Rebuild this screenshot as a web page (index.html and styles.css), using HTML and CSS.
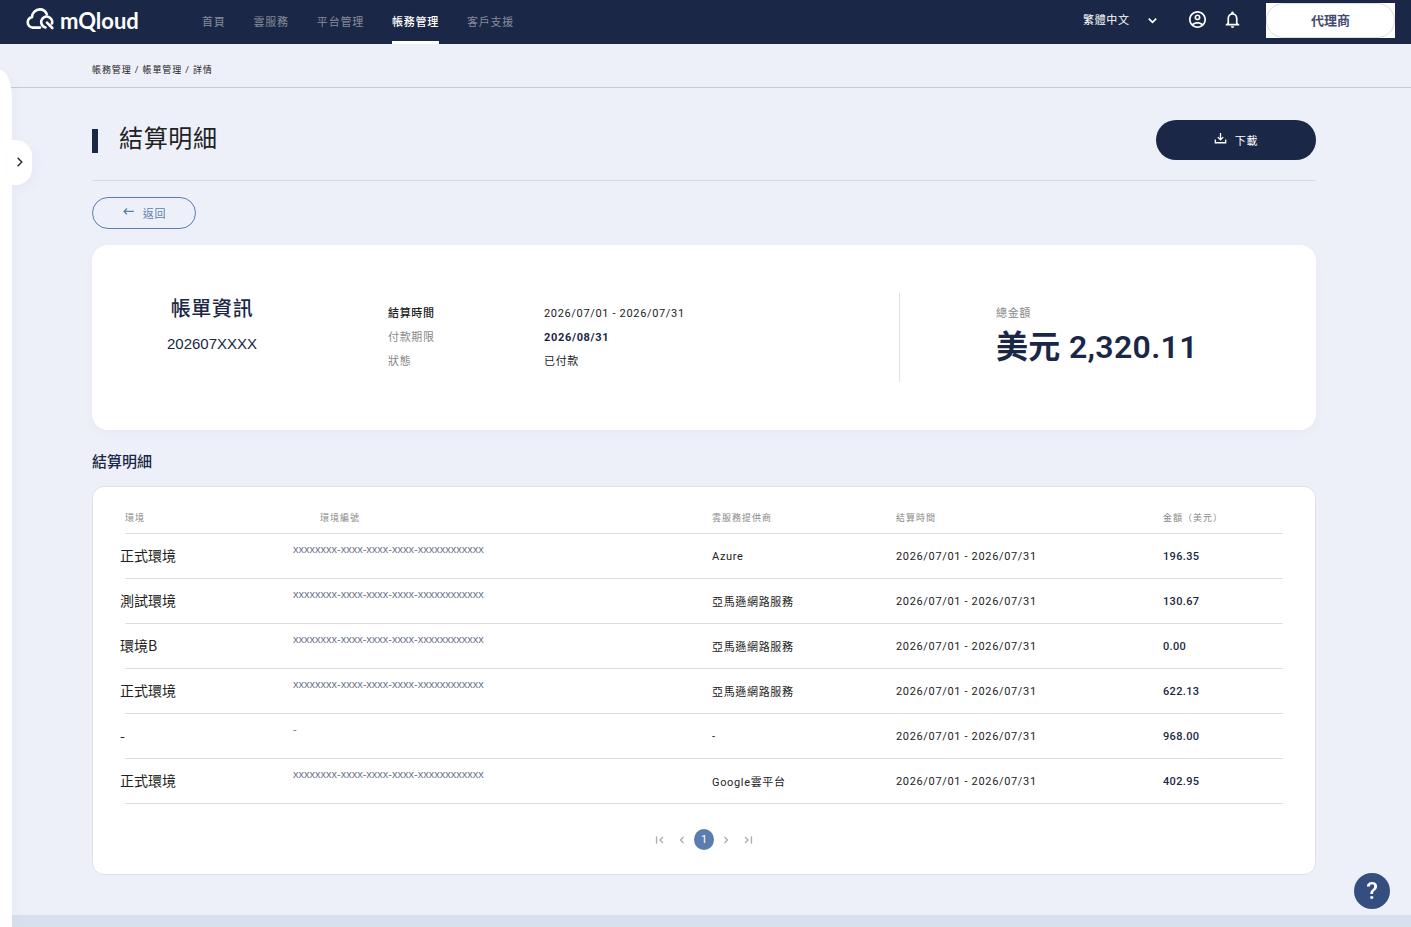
FILE: index.html
```html
<!DOCTYPE html>
<html lang="zh-Hant">
<head>
    <meta charset="UTF-8">
    <meta name="viewport" content="width=device-width, initial-scale=1">
    <title>結算明細 - MQloud</title>
    <link rel="stylesheet" href="styles.css">
</head>
<body>
<header class="header">
    <a class="logo" href="#" aria-label="MQloud">
        <svg class="logo-icon" viewBox="0 0 28 22" fill="none" stroke="#fff" stroke-width="2.6" stroke-linecap="round" stroke-linejoin="round">
            <path d="M14 19.600H6.800A5.300 5.300 0 0 1 6 9.100C6.300 4.600 9.600 1.400 13.800 1.400C17.200 1.400 19.700 3.300 20.800 6.200"/>
            <path d="M19.500 19.400A5.500 5.500 0 1 1 26 15.500M21 14.600L26.300 20"/>
        </svg>
        <span class="logo-text">mQloud</span>
    </a>
    <nav class="nav">
        <a href="#">首頁</a>
        <a href="#">雲服務</a>
        <a href="#">平台管理</a>
        <a href="#" class="active">帳務管理</a>
        <a href="#">客戶支援</a>
    </nav>
    <div class="tools">
        <div class="lang">
            <select aria-label="語言">
                <option>繁體中文</option>
                <option>English</option>
            </select>
            <svg viewBox="0 0 8 8" fill="none" stroke="#fff" stroke-width="1.5"><path d="M.7 2.300L4 5.600L7.300 2.300"/></svg>
        </div>
        <button class="icon-btn" aria-label="帳號">
            <svg viewBox="2 2 20 20" fill="#fff"><path d="M12 2C6.480 2 2 6.480 2 12s4.480 10 10 10 10-4.480 10-10S17.520 2 12 2zM7.350 18.500C8.660 17.560 10.260 17 12 17s3.340.56 4.650 1.500C15.340 19.440 13.740 20 12 20s-3.340-.56-4.650-1.500zm10.790-1.380C16.450 15.800 14.320 15 12 15s-4.450.8-6.140 2.120C4.700 15.730 4 13.950 4 12c0-4.420 3.580-8 8-8s8 3.580 8 8c0 1.950-.7 3.730-1.860 5.120zM12 6c-1.930 0-3.500 1.570-3.500 3.500S10.070 13 12 13s3.500-1.570 3.500-3.500S13.930 6 12 6zm0 5c-.83 0-1.500-.67-1.500-1.500S11.170 8 12 8s1.500.67 1.500 1.500S12.830 11 12 11z"/></svg>
        </button>
        <button class="icon-btn" aria-label="通知">
            <svg viewBox="2 2 20 20" fill="#fff"><path d="M12 22c1.100 0 2-.9 2-2h-4c0 1.100.9 2 2 2zm6-6v-5c0-3.070-1.630-5.640-4.500-6.320V4c0-.83-.67-1.500-1.500-1.500s-1.500.67-1.500 1.500v.68C7.640 5.360 6 7.920 6 11v5l-2 2v1h16v-1l-2-2zm-2 1H8v-6c0-2.480 1.510-4.500 4-4.500s4 2.020 4 4.500v6z"/></svg>
        </button>
        <div class="role">
            <button>代理商</button>
        </div>
    </div>
</header>

<div class="breadcrumb">帳務管理 / 帳單管理 / 詳情</div>

<aside class="drawer">
    <button class="drawer-toggle" aria-label="展開選單">
        <svg viewBox="0 0 10 10" fill="none" stroke="#222" stroke-width="1.100"><path d="M3 1.500L6.500 5L3 8.500"/></svg>
    </button>
</aside>

<main class="content">
    <div class="title-bar">
        <h1>結算明細</h1>
        <button class="download">
            <svg viewBox="0 0 12 12" fill="none" stroke="#fff" stroke-width="1.200"><path d="M6 0V6M3.500 3.800L6 6.300L8.500 3.800M1.200 6V9H10.800V6"/></svg>
            下載
        </button>
    </div>
    <button class="back">
        <svg viewBox="0 0 12 12" fill="none" stroke="#5a7dae" stroke-width="1.200"><path d="M11 5H2M4.600 2.300L1.900 5L4.600 7.700"/></svg>
        返回
    </button>

    <section class="bill">
        <div class="bill-name">
            <h2>帳單資訊</h2>
            <p>202607XXXX</p>
        </div>
        <dl class="bill-info">
            <dt class="strong">結算時間</dt>
            <dd>2026/07/01 - 2026/07/31</dd>
            <dt>付款期限</dt>
            <dd class="due">2026/08/31</dd>
            <dt>狀態</dt>
            <dd>已付款</dd>
        </dl>
        <div class="bill-total">
            <p class="label">總金額</p>
            <p class="total">美元 2,320.11</p>
        </div>
    </section>

    <h3>結算明細</h3>
    <section class="detail">
        <table>
            <colgroup>
                <col class="col-env">
                <col>
                <col class="col-provider">
                <col class="col-period">
                <col class="col-amount">
            </colgroup>
            <thead>
                <tr>
                    <th>環境</th>
                    <th class="th-id">環境編號</th>
                    <th>雲服務提供商</th>
                    <th>結算時間</th>
                    <th>金額（美元）</th>
                </tr>
            </thead>
            <tbody>
                <tr>
                    <td><div class="env">正式環境</div></td>
                    <td class="env-id">xxxxxxxx-xxxx-xxxx-xxxx-xxxxxxxxxxxx</td>
                    <td>Azure</td>
                    <td>2026/07/01 - 2026/07/31</td>
                    <td class="amount">196.35</td>
                </tr>
                <tr>
                    <td><div class="env">測試環境</div></td>
                    <td class="env-id">xxxxxxxx-xxxx-xxxx-xxxx-xxxxxxxxxxxx</td>
                    <td>亞馬遜網路服務</td>
                    <td>2026/07/01 - 2026/07/31</td>
                    <td class="amount">130.67</td>
                </tr>
                <tr>
                    <td><div class="env">環境B</div></td>
                    <td class="env-id">xxxxxxxx-xxxx-xxxx-xxxx-xxxxxxxxxxxx</td>
                    <td>亞馬遜網路服務</td>
                    <td>2026/07/01 - 2026/07/31</td>
                    <td class="amount">0.00</td>
                </tr>
                <tr>
                    <td><div class="env">正式環境</div></td>
                    <td class="env-id">xxxxxxxx-xxxx-xxxx-xxxx-xxxxxxxxxxxx</td>
                    <td>亞馬遜網路服務</td>
                    <td>2026/07/01 - 2026/07/31</td>
                    <td class="amount">622.13</td>
                </tr>
                <tr>
                    <td><div class="env">-</div></td>
                    <td class="env-id">-</td>
                    <td>-</td>
                    <td>2026/07/01 - 2026/07/31</td>
                    <td class="amount">968.00</td>
                </tr>
                <tr>
                    <td><div class="env">正式環境</div></td>
                    <td class="env-id">xxxxxxxx-xxxx-xxxx-xxxx-xxxxxxxxxxxx</td>
                    <td>Google雲平台</td>
                    <td>2026/07/01 - 2026/07/31</td>
                    <td class="amount">402.95</td>
                </tr>
            </tbody>
        </table>
        <div class="pagination">
            <button aria-label="第一頁"><svg viewBox="0 0 10 10"><path d="M1.500 1.500V8.500M8 2L5 5L8 8"/></svg></button>
            <button aria-label="上一頁"><svg viewBox="0 0 10 10"><path d="M6.500 2L3.500 5L6.500 8"/></svg></button>
            <button class="current">1</button>
            <button aria-label="下一頁"><svg viewBox="0 0 10 10"><path d="M3.500 2L6.500 5L3.500 8"/></svg></button>
            <button aria-label="最後一頁"><svg viewBox="0 0 10 10"><path d="M2 2L5 5L2 8M8.500 1.500V8.500"/></svg></button>
        </div>
    </section>
</main>
<footer class="footer"></footer>
<button class="help" aria-label="說明">?</button>
</body>
</html>
```
FILE: styles.css
```css
*{
    box-sizing: border-box;
}
html,body{
    height: 100%;
}
body{
    margin: 0;
    display: flex;
    flex-direction: column;
    font-family: Roboto,"Noto Sans CJK TC",sans-serif;
    font-size: 11px;
    letter-spacing: 0.06em;
    color: #222;
    background-color: #edf0f9;
}
h1,h2,h3,p,dl,dd{
    margin: 0;
}
button,select{
    font: inherit;
    letter-spacing: inherit;
    color: inherit;
    border: 0;
    padding: 0;
    background: none;
    cursor: pointer;
}
a{
    text-decoration: none;
}
svg{
    display: block;
}

/* header */
.header{
    flex: none;
    height: 44px;
    display: flex;
    padding: 0 16px 0 26px;
    background-color: #1a2746;
    color: #fff;
}
.logo{
    width: 176px;
    height: 38px;
    display: flex;
    align-items: center;
    gap: 6px;
    color: #fff;
}
.logo-icon{
    width: 28px;
    height: 22px;
}
.logo-text{
    padding-top: 4px;
    font: 700 22px/24px Lato,sans-serif;
    letter-spacing: 0;
}
.nav{
    display: flex;
    gap: 28px;
    letter-spacing: 0.07em;
}
.nav a{
    height: 44px;
    line-height: 46px;
    color: #858b9b;
    white-space: nowrap;
}
.nav .active{
    color: #fff;
    font-weight: 500;
    border-bottom: 3px solid #fff;
}
.tools{
    height: 35px;
    margin-top: 3px;
    margin-left: auto;
    display: flex;
    align-items: center;
}
.lang{
    display: flex;
    align-items: center;
    margin-right: 32px;
}
.lang select{
    appearance: none;
    width: 74px;
    height: 24px;
}
.lang option{
    color: #222;
}
.lang svg{
    width: 9px;
    height: 9px;
    margin-left: -9px;
    pointer-events: none;
}
.icon-btn{
    margin-right: 18px;
    padding-bottom: 2px;
}
.icon-btn svg{
    width: 17px;
    height: 17px;
}
.role{
    margin-left: 7px;
    background-color: #fff;
}
.role button{
    width: 129px;
    height: 35px;
    padding-bottom: 3px;
    border: 1px solid #dcdce0;
    border-radius: 18px;
    color: #454b70;
    font-size: 13px;
    font-weight: 700;
    letter-spacing: 0;
}

.breadcrumb{
    flex: none;
    height: 44px;
    padding: 4px 92px;
    line-height: 44px;
    font-size: 9px;
    letter-spacing: 0.1em;
    border-bottom: 1px solid #c8cad2;
}

/* collapsed side menu */
.drawer{
    position: fixed;
    top: 70px;
    bottom: 0;
    left: 0;
    width: 12px;
    background-color: #fff;
    border-top-right-radius: 12px 29px;
    box-shadow: 0 0 16px rgba(26,39,70,.04);
}
.drawer-toggle{
    position: absolute;
    top: 70px;
    left: 8px;
    width: 24px;
    height: 45px;
    padding-bottom: 2px;
    background-color: #fff;
    border-radius: 0 16px 16px 0;
    box-shadow: 4px 4px 12px rgba(26,39,70,.03);
}
.drawer-toggle svg{
    width: 12px;
    height: 12px;
    margin-left: 6px;
}

/* content */
.content{
    flex: 1 0 auto;
    padding: 32px 95px 40px 92px;
}
.title-bar{
    height: 61px;
    display: flex;
    align-items: flex-start;
    justify-content: space-between;
    border-bottom: 1px solid #d8d8da;
}
h1{
    display: flex;
    align-items: center;
    gap: 21px;
    font-size: 24px;
    line-height: 38px;
    font-weight: 400;
}
h1::before{
    content: "";
    width: 6px;
    height: 24px;
    margin-top: 4px;
    background-color: #1a2746;
}
.download,.back{
    display: flex;
    align-items: center;
    justify-content: center;
    gap: 8px;
    padding-bottom: 1px;
}
.download svg,.back svg{
    width: 13px;
    height: 13px;
}
.download{
    width: 160px;
    height: 40px;
    border-radius: 20px;
    background-color: #1a2746;
    color: #fff;
}
.back{
    width: 104px;
    height: 32px;
    margin: 16px 0;
    border: 1px solid #5a7dae;
    border-radius: 16px;
    color: #5a7dae;
}
.bill{
    display: flex;
    padding: 48px 0;
    background-color: #fff;
    border-radius: 16px;
    box-shadow: 0 4px 12px rgba(26,39,70,.03);
}
.bill-name{
    width: 240px;
    margin-right: 56px;
    text-align: center;
    color: #1a2746;
}
.bill-name h2{
    font-size: 20px;
    line-height: 32px;
    font-weight: 500;
}
.bill-name p{
    margin-top: 9px;
    font: 15px/20px "Liberation Sans",sans-serif;
    letter-spacing: 0;
}
.bill-info{
    flex: 1;
    display: grid;
    grid-template-columns: 156px 1fr;
    align-content: start;
    padding-top: 9px;
    line-height: 24px;
}
.bill-info dt{
    color: #888;
}
.bill-info .strong{
    color: #222;
    font-weight: 500;
}
.bill-info .due{
    color: #1a2746;
    font-weight: 700;
}
.bill-total{
    width: 417px;
    min-height: 89px;
    padding: 9px 0 0 96px;
    border-left: 1px solid #e0e0e3;
}
.bill-total .label{
    line-height: 24px;
    color: #888;
}
.bill-total .total{
    font-size: 32px;
    line-height: 42px;
    font-weight: 600;
    letter-spacing: 0.01em;
    color: #1a2746;
}
h3{
    margin: 20px 0 12px;
    font-size: 15px;
    line-height: 24px;
    font-weight: 500;
    letter-spacing: 0;
    color: #1a2746;
}
.detail{
    padding: 15px 32px 24px;
    background-color: #fff;
    border: 1px solid #e0e1e5;
    border-radius: 12px;
}
table{
    width: 100%;
    table-layout: fixed;
    border-collapse: separate;
    border-spacing: 0;
}
.col-env{
    width: 168px;
}
.col-provider{
    width: 184px;
}
.col-period{
    width: 267px;
}
.col-amount{
    width: 120px;
}
th,td{
    padding: 0;
    text-align: left;
    border-bottom: 1px solid #dcdcde;
}
th{
    height: 32px;
    font-size: 9px;
    letter-spacing: 1px;
    font-weight: 400;
    color: #888;
}
.th-id{
    padding-left: 27px;
}
td{
    height: 45px;
}
.env{
    margin-left: -5px;
    padding-bottom: 3px;
    font-family: "Noto Sans CJK TC",sans-serif;
    font-size: 14px;
    line-height: 20px;
    letter-spacing: 0;
}
.env-id{
    padding-top: 8px;
    vertical-align: top;
    font: 11px/14px "Liberation Sans",sans-serif;
    letter-spacing: 0;
    color: #6b7489;
}
.amount{
    font-weight: 500;
    letter-spacing: 0.03em;
    color: #1a2746;
}
.pagination{
    display: flex;
    align-items: center;
    justify-content: center;
    gap: 2px;
    margin-top: 25px;
}
.pagination button{
    width: 20px;
    height: 21px;
}
.pagination svg{
    width: 10px;
    height: 10px;
    margin: 0 auto;
    fill: none;
    stroke: #aaa;
    stroke-width: 1.3;
}
.pagination .current{
    border-radius: 50%;
    background-color: #5a7dae;
    color: #fff;
    letter-spacing: 0;
}
.footer{
    flex: none;
    height: 12px;
    background-color: #d8dfee;
}
.help{
    position: fixed;
    right: 21px;
    bottom: 18px;
    width: 36px;
    height: 36px;
    border-radius: 50%;
    background-color: #344e80;
    color: #fff;
    font-size: 24px;
    font-weight: 500;
    letter-spacing: 0;
}
```
